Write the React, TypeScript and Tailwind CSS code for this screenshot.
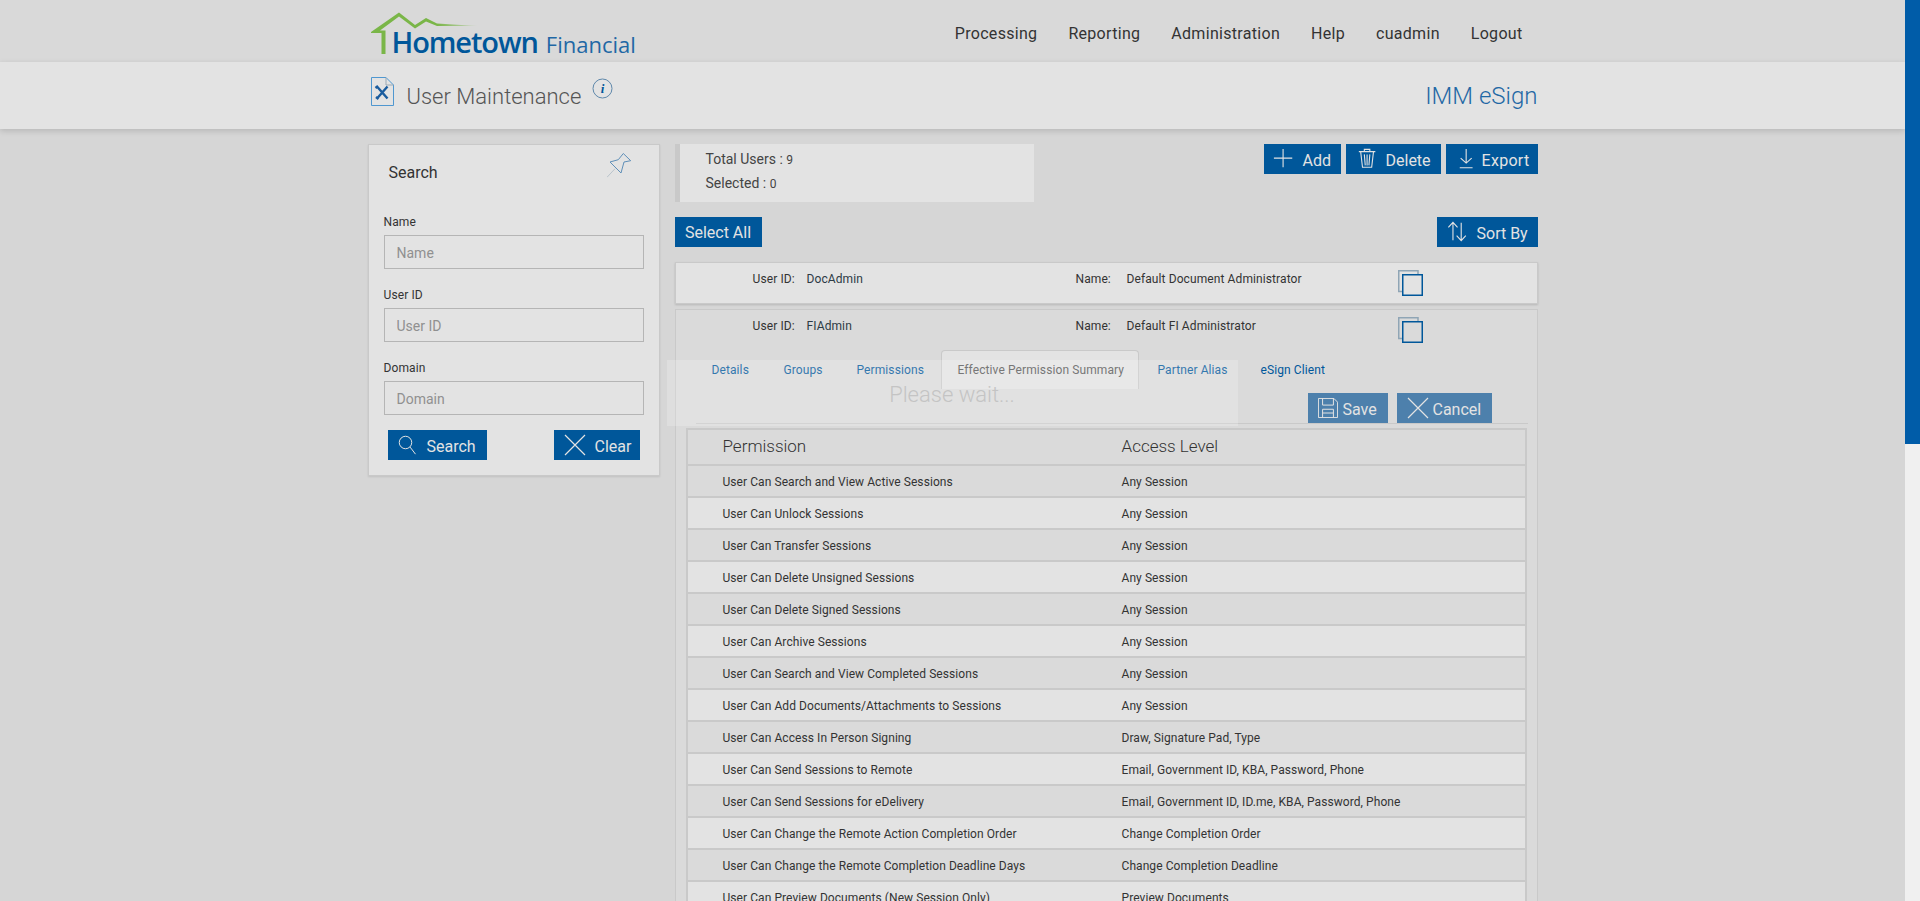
import { ReactNode } from "react";

const rows = [
  ["User Can Search and View Active Sessions", "Any Session"],
  ["User Can Unlock Sessions", "Any Session"],
  ["User Can Transfer Sessions", "Any Session"],
  ["User Can Delete Unsigned Sessions", "Any Session"],
  ["User Can Delete Signed Sessions", "Any Session"],
  ["User Can Archive Sessions", "Any Session"],
  ["User Can Search and View Completed Sessions", "Any Session"],
  ["User Can Add Documents/Attachments to Sessions", "Any Session"],
  ["User Can Access In Person Signing", "Draw, Signature Pad, Type"],
  ["User Can Send Sessions to Remote", "Email, Government ID, KBA, Password, Phone"],
  ["User Can Send Sessions for eDelivery", "Email, Government ID, ID.me, KBA, Password, Phone"],
  ["User Can Change the Remote Action Completion Order", "Change Completion Order"],
  ["User Can Change the Remote Completion Deadline Days", "Change Completion Deadline"],
  ["User Can Preview Documents (New Session Only)", "Preview Documents"],
];

const navItems = ["Processing", "Reporting", "Administration", "Help", "cuadmin", "Logout"];

const Icon = ({ size, children }: { size: number; children: ReactNode }) => (
  <svg width={size} height={size} viewBox="0 0 24 24" fill="none" stroke="currentColor" strokeWidth="1.200" className="shrink-0">
    {children}
  </svg>
);

const CloseIcon = () => (
  <Icon size={24}>
    <path d="M2 2 22 22M22 2 2 22" />
  </Icon>
);

const CopyBox = () => (
  <svg width="25" height="26" viewBox="0 0 25 26" fill="none">
    <path d="M4 21.500H.75V.75H20V4" stroke="#8fa5b5" strokeWidth="1.500" />
    <rect x="4.750" y="4.750" width="19.500" height="20.500" stroke="#00579a" strokeWidth="1.500" />
  </svg>
);

const Btn = ({ icon, label, className }: { icon: ReactNode; label: string; className: string }) => (
  <button className={`flex h-[30px] items-center text-[16px] text-[#e3e3e3] ${className}`}>
    {icon}
    <span className="pt-[3px]">{label}</span>
  </button>
);

const Field = ({ label, mt }: { label: string; mt: string }) => (
  <div className={mt}>
    <div className="text-[12px] leading-[14px] tracking-[0.1px] text-[#333]">{label}</div>
    <input
      placeholder={label}
      className="mt-[6px] h-[34px] w-[260px] border border-[#b5b5b5] bg-[#e3e3e3] pl-[12px] pt-[2px] text-[14px] text-[#555] placeholder:text-[#909090] outline-none"
    />
  </div>
);

const UserHead = ({ id, name }: { id: string; name: string }) => (
  <div className="flex h-[40px] text-[12px] tracking-[0.1px] text-[#333]">
    <div className="w-[76px]" />
    <div className="w-[54px] pt-[7px] leading-[16px]">User ID:</div>
    <div className="w-[269px] pt-[7px] leading-[16px] text-[#2d3a45]">{id}</div>
    <div className="w-[51px] pt-[7px] leading-[16px]">Name:</div>
    <div className="w-[271px] pt-[7px] leading-[16px]">{name}</div>
    <div className="pt-[6px]">
      <CopyBox />
    </div>
  </div>
);

export default function App() {
  return (
    <div className="flex h-[901px] overflow-hidden bg-[#d6d6d6] font-['Roboto',sans-serif]">
      <div className="w-[1905px] shrink-0">
        <header className="h-[62px] bg-[#d9d9d9]">
          <div className="mx-auto flex w-[1170px] justify-between">
            <div className="relative h-[62px] w-[280px]">
              <svg width="116" height="46" viewBox="0 0 116 46" className="absolute left-[2px] top-[11px]">
                <defs>
                  <linearGradient id="tail" x1="0" x2="1" y1="0" y2="0">
                    <stop offset="0" stopColor="#7ab648" />
                    <stop offset="1" stopColor="#7ab648" stopOpacity="0.1" />
                  </linearGradient>
                </defs>
                <path d="M1 21 29 1.500 45 14 56 7 67 12.500 67 15 56 10.500 45 17.500 29 5.500 10 19.500H15.500V43H11.500V22H1Z" fill="#7ab648" />
                <path d="M67 12.500 108 15 67 15Z" fill="url(#tail)" />
              </svg>
              <div className="absolute left-[24px] top-[24px] flex items-baseline whitespace-nowrap text-[#00579a]">
                <span className="font-['Open_Sans',sans-serif] text-[29px] font-semibold leading-[36px] tracking-[-1.1px]">Hometown</span>
                <span className="ml-[8px] font-['Open_Sans',sans-serif] text-[22px] leading-[36px] text-[#1f68a5]">Financial</span>
              </div>
            </div>
            <nav className="flex gap-[31px] pr-[15px] pt-[24px] text-[16px] leading-[20px] tracking-[0.3px] text-[#333]">
              {navItems.map((item) => (
                <div key={item}>{item}</div>
              ))}
            </nav>
          </div>
        </header>

        <div className="h-[67px] bg-[#e3e3e3] shadow-[0_2px_6px_rgba(0,0,0,0.15)]">
          <div className="mx-auto flex h-full w-[1170px] justify-between">
            <div className="flex pl-[2px]">
              <svg width="25" height="30" viewBox="0 0 25 30" fill="none" className="mt-[15px]">
                <path d="M1.500.5H16L23.500 8V28.500H1.500Z" stroke="#4f97d0" />
                <path d="M16 .5V8H23.500" stroke="#9aa9b5" />
                <path d="M7 21.500 17.500 9.500M7 9.500 17.500 21.500M5.500 11 8 9M6 20 8.500 22" stroke="#1a5c9e" strokeWidth="2.400" />
              </svg>
              <h1 className="ml-[12px] mt-[20px] text-[22px] font-light leading-[30px] text-[#555]">User Maintenance</h1>
              <svg width="21" height="21" viewBox="0 0 21 21" fill="none" className="ml-[11px] mt-[16px]">
                <circle cx="10.500" cy="10.500" r="9.500" stroke="#5f88ab" />
                <text x="10.500" y="15" textAnchor="middle" fontSize="13" fontStyle="italic" fontWeight="700" fontFamily="Liberation Serif, serif" fill="#00579a">i</text>
              </svg>
            </div>
            <div className="pt-[19px] text-[24px] font-light leading-[30px] text-[#1f68a5]">IMM eSign</div>
          </div>
        </div>

        <main className="mx-auto flex w-[1170px] pt-[15px]">
          <aside className="h-[332px] w-[292px] shrink-0 border border-[#c9c9c9] bg-[#e3e3e3] p-px pl-[15px] shadow-[0_1px_2px_rgba(0,0,0,0.1)]">
            <div className="flex justify-between pr-[26px] pt-[7px]">
              <h2 className="pl-[5px] pt-[9px] text-[16px] leading-[22px] text-[#333]">Search</h2>
              <svg width="25" height="26" viewBox="0 0 25 26" fill="none">
                <path d="M16.300.5 23.700 7.700 17 9 14 20 3 9 11.300 6.700Z" stroke="#5f8fb8" />
                <path d="M8 15.700 0 24.300" stroke="#b9c3cb" />
              </svg>
            </div>
            <Field label="Name" mt="mt-[31px]" />
            <Field label="User ID" mt="mt-[19px]" />
            <Field label="Domain" mt="mt-[19px]" />
            <div className="mt-[15px] flex w-[256px] justify-between pl-[4px]">
              <Btn
                label="Search"
                className="w-[99px] bg-[#00579a] pl-[10px]"
                icon={
                  <span className="mr-[9px]">
                    <Icon size={20}>
                      <circle cx="9" cy="9" r="7.500" />
                      <path d="M14.500 14.500 21 23" />
                    </Icon>
                  </span>
                }
              />
              <Btn label="Clear" className="w-[86px] bg-[#00579a] pl-[9px]" icon={<span className="mr-[8px]"><CloseIcon /></span>} />
            </div>
          </aside>

          <section className="ml-[15px] w-[863px]">
            <div className="flex h-[58px] justify-between">
              <div className="h-[58px] w-[359px] border-l-[5px] border-[#c9c9c9] bg-[#e3e3e3] pl-[26px] pt-[4px] text-[14px] leading-[23px] text-[#444]">
                <div>Total Users : <span className="text-[12px]">9</span></div>
                <div>Selected : <span className="text-[12px]">0</span></div>
              </div>
              <div className="flex gap-[5px]">
                <Btn
                  label="Add"
                  className="w-[77px] bg-[#00579a] pl-[9px]"
                  icon={<span className="mr-[8px]"><Icon size={22}><path d="M11 1V21M1 11H21" /></Icon></span>}
                />
                <Btn
                  label="Delete"
                  className="w-[95px] bg-[#00579a] pl-[11px]"
                  icon={
                    <span className="mr-[7px]">
                      <Icon size={22}>
                        <path d="M2 4H20M8 4V1.500H14V4M4 4 6 21H16L18 4M8 7 9 19M11 7V19M14 7 13 19" />
                      </Icon>
                    </span>
                  }
                />
                <Btn
                  label="Export"
                  className="w-[92px] bg-[#00579a] pl-[11px] tracking-[0.3px]"
                  icon={<span className="mr-[3px]"><Icon size={22}><path d="M10 1V16M4 11 10 16.500 16 11M3 21.500H17" /></Icon></span>}
                />
              </div>
            </div>

            <div className="mt-[15px] flex justify-between">
              <button className="h-[30px] w-[87px] bg-[#00579a] pt-[2px] text-[16px] text-[#e3e3e3]">Select All</button>
              <Btn
                label="Sort By"
                className="w-[101px] bg-[#00579a] pl-[10px]"
                icon={<span className="mr-[8px]"><Icon size={22}><path d="M6.500 21V1.500M1.500 7 6.500 1.500 11.500 7M15.500 2V21M10.500 16 15.500 21.500 20.500 16" /></Icon></span>}
              />
            </div>

            <div className="mt-[15px] h-[42px] border border-[#c9c9c9] bg-[#e3e3e3] p-px shadow-[0_1px_2px_rgba(0,0,0,0.15)]">
              <UserHead id="DocAdmin" name="Default Document Administrator" />
            </div>

            <div className="relative mt-[5px] h-[700px] border border-[#c9c9c9] bg-[#dadada] p-px">
              <UserHead id="FIAdmin" name="Default FI Administrator" />

              <div className="-mt-[1px] ml-[9px] mr-[8px] flex h-[39px] items-stretch text-[12px] tracking-[0.1px] text-[#00579a]">
                <div className="w-[98px] pl-[26px] pt-[11px]">Details</div>
                <div className="w-[73px] pt-[11px]">Groups</div>
                <div className="w-[84px] pt-[11px]">Permissions</div>
                <div className="w-[198px] rounded-t-[4px] border-x border-t border-[#c9c9c9] bg-[#e3e3e3] pl-[16px] pt-[10px] text-[#555]">Effective Permission Summary</div>
                <div className="w-[103px] pl-[19px] pt-[11px]">Partner Alias</div>
                <div className="pl-[19px] pt-[11px]">eSign Client</div>
              </div>

              <div className="ml-[19px] mr-[8px] flex h-[35px] items-start justify-end gap-[9px] border-b border-[#c9c9c9] pr-[36px] pt-[4px]">
                <Btn
                  label="Save"
                  className="w-[80px] bg-[#4d80ac] pl-[10px]"
                  icon={
                    <span className="mr-[5px]">
                      <Icon size={20}>
                        <path d="M.5.5H19L23.500 5V23.500H.5ZM5.500.5V8.500H18.500V.5M5.500 23.500V13.500H18.500V23.500M5.500 18H18.500" />
                      </Icon>
                    </span>
                  }
                />
                <Btn label="Cancel" className="w-[95px] bg-[#4d80ac] pl-[9px]" icon={<span className="mr-[3px]"><CloseIcon /></span>} />
              </div>

              <div className="mx-[9px] mt-[4px] border-2 border-b-0 border-[#c9c9c9]">
                <div className="flex h-[36px] items-center border-b-2 border-[#c9c9c9] bg-[#dadada] text-[17px] font-light text-[#333]">
                  <div className="w-[434px] pl-[35px]">Permission</div>
                  <div>Access Level</div>
                </div>
                {rows.map(([perm, level], i) => (
                  <div
                    key={perm}
                    className={`flex h-[32px] items-center border-b-2 border-[#c9c9c9] pt-[2px] text-[12px] tracking-[0.07px] text-[#333] ${i % 2 === 0 ? "bg-[#dadada]" : "bg-[#e3e3e3]"}`}
                  >
                    <div className="w-[434px] pl-[35px]">{perm}</div>
                    <div>{level}</div>
                  </div>
                ))}
              </div>

              <div className="absolute left-[-9px] top-[50px] flex h-[66px] w-[571px] items-center justify-center bg-white/20 pt-[2px] text-[22px] font-light text-[#c4c4c4]">
                Please wait...
              </div>
            </div>
          </section>
        </main>
      </div>

      <div className="h-full w-[15px] bg-[#f0f0f0]">
        <div className="h-[444px] bg-[#005ca8]" />
      </div>
    </div>
  );
}
